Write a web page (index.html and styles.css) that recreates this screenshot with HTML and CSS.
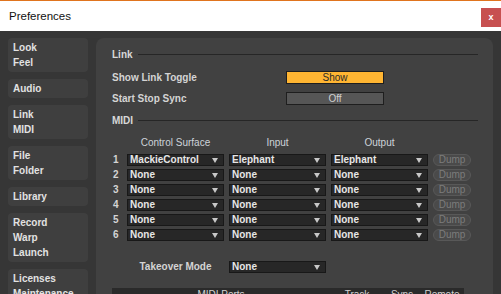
FILE: index.html
```html
<!DOCTYPE html>
<html lang="en">
<head>
    <meta charset="UTF-8">
    <title>Preferences</title>
    <link rel="stylesheet" href="styles.css">
</head>
<body>

    <div class="titlebar">
        <span class="title">Preferences</span>
        <span class="close">x</span>
    </div>

    <div class="main">
        <nav class="sidebar">
            <div class="tab">Look<br>Feel</div>
            <div class="tab">Audio</div>
            <div class="tab active">Link<br>MIDI</div>
            <div class="tab">File<br>Folder</div>
            <div class="tab">Library</div>
            <div class="tab">Record<br>Warp<br>Launch</div>
            <div class="tab">Licenses<br>Maintenance</div>
        </nav>

        <section class="panel">
            <div class="section-head">Link</div>
            <div class="option first">
                <span class="label">Show Link Toggle</span>
                <span class="toggle on">Show</span>
            </div>
            <div class="option">
                <span class="label">Start Stop Sync</span>
                <span class="toggle">Off</span>
            </div>

            <div class="section-head midi">MIDI</div>

            <div class="grid heads">
                <span></span>
                <span>Control Surface</span>
                <span>Input</span>
                <span>Output</span>
                <span></span>
            </div>

            <div class="grid rows">
                <span class="num">1</span>
                <span class="select">MackieControl</span>
                <span class="select">Elephant</span>
                <span class="select">Elephant</span>
                <span class="dump">Dump</span>

                <span class="num">2</span>
                <span class="select">None</span>
                <span class="select">None</span>
                <span class="select">None</span>
                <span class="dump">Dump</span>

                <span class="num">3</span>
                <span class="select">None</span>
                <span class="select">None</span>
                <span class="select">None</span>
                <span class="dump">Dump</span>

                <span class="num">4</span>
                <span class="select">None</span>
                <span class="select">None</span>
                <span class="select">None</span>
                <span class="dump">Dump</span>

                <span class="num">5</span>
                <span class="select">None</span>
                <span class="select">None</span>
                <span class="select">None</span>
                <span class="dump">Dump</span>

                <span class="num">6</span>
                <span class="select">None</span>
                <span class="select">None</span>
                <span class="select">None</span>
                <span class="dump">Dump</span>
            </div>

            <div class="grid takeover">
                <span></span>
                <span class="takeover-label">Takeover Mode</span>
                <span class="select">None</span>
            </div>

            <div class="ports-head">
                <span class="col-ports">MIDI Ports</span>
                <span class="col-track">Track</span>
                <span class="col-sync">Sync</span>
                <span class="col-remote">Remote</span>
            </div>
        </section>
    </div>

</body>
</html>
```

FILE: styles.css
```css
body {
    margin: 0;
    height: 294px;
    overflow: hidden;
    background: #363636;
    font-family: 'Liberation Sans', Arial, sans-serif;
    font-size: 10px;
    color: #d4d4d4;
}

/* window title */
.titlebar {
    height: 30px;
    background: #ffffff;
    border-top: 1px solid #e0741e;
    display: flex;
    justify-content: space-between;
    align-items: flex-start;
}
.title {
    margin-left: 9px;
    line-height: 30px;
    font-size: 11.5px;
    color: #111;
}
.close {
    margin-top: 7px;
    width: 20px;
    height: 19px;
    background: #c75050;
    color: #fff;
    font-size: 9px;
    font-weight: bold;
    line-height: 18px;
    text-align: center;
}

.main {
    display: flex;
    gap: 8px;
    padding: 7px 8px 0 8px;
}

/* left tabs */
.sidebar {
    width: 80px;
    flex-shrink: 0;
    display: flex;
    flex-direction: column;
    gap: 7px;
}
.tab {
    background: #3f3f3f;
    border-radius: 4px;
    padding: 2px 5px;
    line-height: 15px;
    font-weight: bold;
    color: #e2e2e2;
    white-space: nowrap;
}

/* right panel */
.panel {
    flex: 1;
    height: 300px;
    background: #414141;
    border-radius: 8px 8px 0 0;
    padding: 9px 15px 0 16px;
}
.section-head {
    display: flex;
    align-items: center;
    height: 14px;
    font-weight: bold;
    color: #d8d8d8;
}
.section-head::after {
    content: "";
    flex: 1;
    height: 1px;
    margin-left: 5px;
    background: #262626;
}
.section-head.midi {
    margin-top: 8px;
}

.option {
    display: flex;
    align-items: center;
    height: 13px;
    margin-top: 8px;
}
.option.first {
    margin-top: 10px;
}
.label {
    width: 174px;
    font-weight: bold;
}
.toggle {
    box-sizing: border-box;
    width: 98px;
    height: 13px;
    line-height: 11px;
    border: 1px solid #1e1e1e;
    background: #565656;
    color: #d0d0d0;
    text-align: center;
}
.toggle.on {
    background: #ffb532;
    color: #2a2a2a;
}

/* midi table */
.grid {
    display: grid;
    grid-template-columns: 10px 97px 97px 97px 38px;
    column-gap: 5px;
}
.heads {
    margin-top: 9px;
    height: 14px;
    line-height: 14px;
    text-align: center;
    color: #cdd3d9;
}
.rows {
    margin-top: 4px;
    grid-auto-rows: 12px;
    row-gap: 3px;
}
.num {
    padding-left: 1px;
    line-height: 12px;
    font-weight: bold;
}
.select {
    box-sizing: border-box;
    height: 12px;
    position: relative;
    background: #272727;
    border: 1px solid #181818;
    padding-left: 2px;
    line-height: 10px;
    font-weight: bold;
    color: #e6e6e6;
}
.select::after {
    content: "";
    position: absolute;
    right: 5px;
    top: 3px;
    border-left: 3px solid transparent;
    border-right: 3px solid transparent;
    border-top: 5px solid #c8c8c8;
}
.dump {
    box-sizing: border-box;
    height: 12px;
    line-height: 10px;
    border: 1px solid #585858;
    border-radius: 6px;
    background: #4a4a4a;
    color: #7c7c7c;
    text-align: center;
}

.takeover {
    margin-top: 20px;
}
.takeover-label {
    text-align: center;
    line-height: 12px;
    font-weight: bold;
}

.ports-head {
    margin-top: 15px;
    width: 352px;
    height: 16px;
    background: #2a2a2a;
    display: flex;
    line-height: 14px;
    color: #d0d0d0;
    text-align: center;
}
.col-ports { width: 218px; }
.col-track { width: 54px; }
.col-sync { width: 36px; }
.col-remote { width: 44px; }
```
